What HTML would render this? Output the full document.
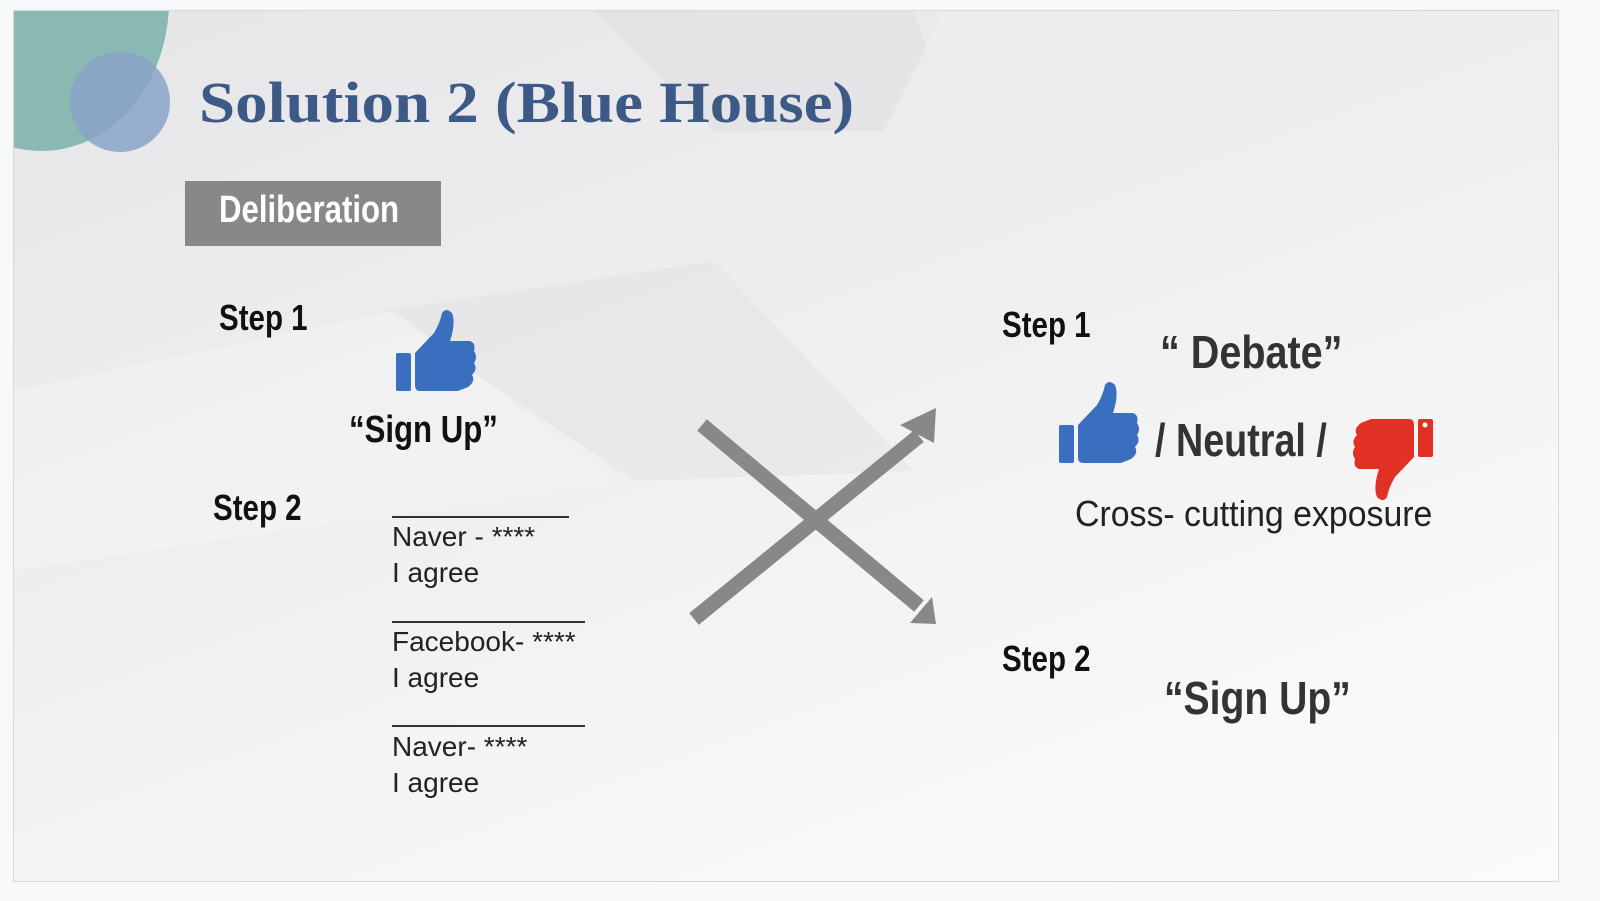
<!DOCTYPE html>
<html><head><meta charset="utf-8"><style>
body{margin:0;width:1600px;height:901px;background:#f7f8fa;position:relative;overflow:hidden;font-family:"Liberation Sans",sans-serif}
#s{position:absolute;left:13px;top:10px;width:1544px;height:870px;background:linear-gradient(160deg,#e6e5e8 0%,#ececee 30%,#f2f2f3 55%,#f8f8f9 80%,#fbfbfb 100%);border:1px solid #d8d8d8;overflow:hidden}
.a{position:absolute}
.c{font-weight:bold;color:#111;transform-origin:left top;transform:scaleX(.82);white-space:nowrap}
.g{color:#333}
.n{font-size:28px;color:#222;line-height:36px}
.ln{position:absolute;height:2px;background:#333}
</style></head><body>
<div id="s">
<svg class="a" style="left:0;top:0" width="1544" height="870">
<polygon points="580,0 930,0 870,120 700,120" fill="#e0dfe2" opacity=".6"/>
<polygon points="370,300 700,250 900,460 620,470" fill="#e2e2e4" opacity=".5"/>
<polygon points="900,0 1230,0 1300,200 1000,300" fill="#efeff0" opacity=".6"/>
<polygon points="0,380 380,300 600,470 0,560" fill="#f4f4f5" opacity=".6"/>
</svg>
<div class="a" style="left:-100px;top:-160px;width:255px;height:300px;border-radius:50%;background:#7fb2ad;opacity:.9"></div>
<div class="a" style="left:56px;top:41px;width:100px;height:100px;border-radius:50%;background:#88a3c8;opacity:.85"></div>
<div class="a" style="left:185px;top:58px;font:bold 58px 'Liberation Serif',serif;color:#3d5a87;white-space:nowrap;transform:scaleX(1.12);transform-origin:left top">Solution 2 (Blue House)</div>
<div class="a" style="left:171px;top:170px;width:256px;height:65px;background:#888"></div>
<div class="a c" style="left:205px;top:178px;font-size:38px;color:#fff">Deliberation</div>
<div class="a c" style="left:205px;top:286px;font-size:36px">Step 1</div>
<div class="a c" style="left:199px;top:476px;font-size:36px">Step 2</div>
<div class="a c" style="left:335px;top:398px;font-size:38px">“Sign Up”</div>
<svg class="a" style="left:382px;top:298px" width="82" height="84" viewBox="0 0 82 84">
<rect x="0" y="44" width="15" height="38" rx="2" fill="#3a6fbf"/>
<path d="M19 44 L38 24 Q44 14 46 4 Q50 -2 56 4 Q60 14 54 32 L74 32 Q80 34 78 42 Q82 48 78 54 Q82 60 76 66 Q80 72 72 78 L62 82 L24 82 Q19 82 19 76 Z" fill="#3a6fbf"/>
</svg>
<div class="ln" style="left:378px;top:505px;width:177px"></div>
<div class="a n" style="left:378px;top:508px">Naver - ****<br>I agree</div>
<div class="ln" style="left:378px;top:610px;width:193px"></div>
<div class="a n" style="left:378px;top:613px">Facebook- ****<br>I agree</div>
<div class="ln" style="left:378px;top:714px;width:193px"></div>
<div class="a n" style="left:378px;top:718px">Naver- ****<br>I agree</div>
<svg class="a" style="left:0;top:0" width="1544" height="870">
<g stroke="#888" stroke-width="15"><line x1="688" y1="414" x2="905" y2="595"/><line x1="680" y1="608" x2="905" y2="425"/></g>
<polygon points="922,397 920,432 886,414" fill="#888"/>
<polygon points="922,613 896,612 918,586" fill="#888"/>
</svg>
<div class="a c" style="left:988px;top:293px;font-size:36px">Step 1</div>
<div class="a c" style="left:988px;top:627px;font-size:36px">Step 2</div>
<div class="a c g" style="left:1146px;top:314px;font-size:46px;transform:scaleX(.86)">“ Debate”</div>
<div class="a c g" style="left:1141px;top:402px;font-size:46px">/ Neutral /</div>
<div class="a c g" style="left:1150px;top:660px;font-size:46px;transform:scaleX(.85)">“Sign Up”</div>
<div class="a" style="left:1061px;top:482px;font-size:36px;color:#222;transform:scaleX(.94);transform-origin:left top;white-space:nowrap">Cross- cutting exposure</div>
<svg class="a" style="left:1045px;top:370px" width="82" height="84" viewBox="0 0 82 84">
<rect x="0" y="44" width="15" height="38" rx="2" fill="#3a6fbf"/>
<path d="M19 44 L38 24 Q44 14 46 4 Q50 -2 56 4 Q60 14 54 32 L74 32 Q80 34 78 42 Q82 48 78 54 Q82 60 76 66 Q80 72 72 78 L62 82 L24 82 Q19 82 19 76 Z" fill="#3a6fbf"/>
</svg>
<svg class="a" style="left:1337px;top:406px" width="82" height="84" viewBox="0 0 82 84" >
<g transform="translate(82,84) rotate(180)">
<rect x="0" y="44" width="15" height="38" rx="2" fill="#e13124"/>
<path d="M19 44 L38 24 Q44 14 46 4 Q50 -2 56 4 Q60 14 54 32 L74 32 Q80 34 78 42 Q82 48 78 54 Q82 60 76 66 Q80 72 72 78 L62 82 L24 82 Q19 82 19 76 Z" fill="#e13124"/>
</g>
<circle cx="74" cy="8" r="2.5" fill="#fff"/>
</svg>
</div>
</body></html>
